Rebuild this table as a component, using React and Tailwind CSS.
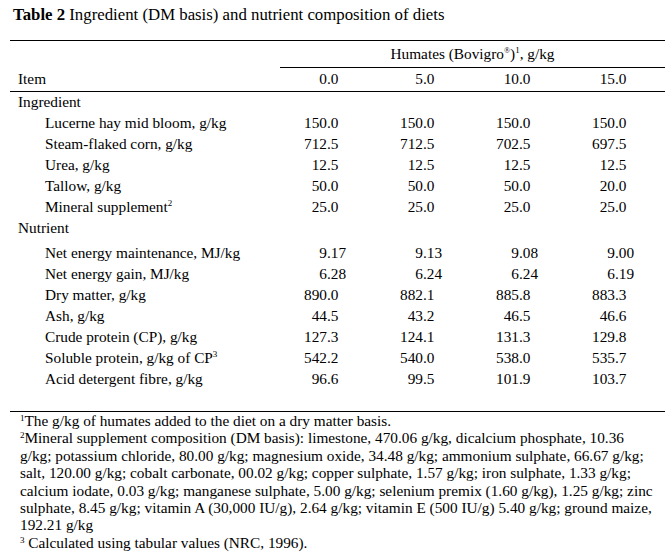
const ingredients = [
  { label: 'Lucerne hay mid bloom, g/kg', values: ['150.0', '150.0', '150.0', '150.0'] },
  { label: 'Steam-flaked corn, g/kg', values: ['712.5', '712.5', '702.5', '697.5'] },
  { label: 'Urea, g/kg', values: ['12.5', '12.5', '12.5', '12.5'] },
  { label: 'Tallow, g/kg', values: ['50.0', '50.0', '50.0', '20.0'] },
  { label: 'Mineral supplement', sup: '2', values: ['25.0', '25.0', '25.0', '25.0'] },
]

const nutrients = [
  { label: 'Net energy maintenance, MJ/kg', values: ['9.17', '9.13', '9.08', '9.00'] },
  { label: 'Net energy gain, MJ/kg', values: ['6.28', '6.24', '6.24', '6.19'] },
  { label: 'Dry matter, g/kg', values: ['890.0', '882.1', '885.8', '883.3'] },
  { label: 'Ash, g/kg', values: ['44.5', '43.2', '46.5', '46.6'] },
  { label: 'Crude protein (CP), g/kg', values: ['127.3', '124.1', '131.3', '129.8'] },
  { label: 'Soluble protein, g/kg of CP', sup: '3', values: ['542.2', '540.0', '538.0', '535.7'] },
  { label: 'Acid detergent fibre, g/kg', values: ['96.6', '99.5', '101.9', '103.7'] },
]

const footnotes = [
  { sup: '1', text: 'The g/kg of humates added to the diet on a dry matter basis.' },
  { sup: '2', text: 'Mineral supplement composition (DM basis): limestone, 470.06 g/kg, dicalcium phosphate, 10.36' },
  { text: 'g/kg; potassium chloride, 80.00 g/kg; magnesium oxide, 34.48 g/kg; ammonium sulphate, 66.67 g/kg;' },
  { text: 'salt, 120.00 g/kg; cobalt carbonate, 00.02 g/kg; copper sulphate, 1.57 g/kg; iron sulphate, 1.33 g/kg;' },
  { text: 'calcium iodate, 0.03 g/kg; manganese sulphate, 5.00 g/kg; selenium premix (1.60 g/kg), 1.25 g/kg; zinc' },
  { text: 'sulphate, 8.45 g/kg; vitamin A (30,000 IU/g), 2.64 g/kg; vitamin E (500 IU/g) 5.40 g/kg; ground maize,' },
  { text: '192.21 g/kg' },
  { sup: '3', text: ' Calculated using tabular values (NRC, 1996).' },
]

// number split at the decimal point so columns line up on it
const Num = ({ value }) => {
  const [whole, frac] = value.split('.')
  return (
    <div className="flex w-[96px] last:w-[97px]">
      <span className="w-[47px] shrink-0 text-right">{whole}</span>
      <span>.{frac}</span>
    </div>
  )
}

const Row = ({ item, className = '' }) => (
  <div className={`flex h-[21px] items-center leading-[21px] ${className}`}>
    <div className="w-[270px] shrink-0 pl-[35px]">
      {item.label}
      {item.sup && <sup className="top-[-6px] text-[9px]">{item.sup}</sup>}
    </div>
    {item.values.map((v, i) => (
      <Num key={i} value={v} />
    ))}
  </div>
)

const App = () => {
  return (
    <div className="h-[556px] w-[672px] bg-white font-['Liberation_Serif','Times_New_Roman',serif] text-[15.3px] text-black">
      <div className="pl-[13px] pt-[5px] text-[16.8px] leading-[20px]">
        <span className="font-bold">Table 2</span> Ingredient (DM basis) and nutrient composition of diets
      </div>

      <div className="ml-[10px] mt-[15px] w-[655px]">
        <div className="border-t border-black" />
        <div className="flex h-[26px] items-center">
          <div className="w-[270px] shrink-0" />
          <div className="flex-1 text-center">
            Humates (Bovigro<sup className="top-[-6px] text-[8px]">®</sup>)<sup className="top-[-6px] text-[9px]">1</sup>, g/kg
          </div>
        </div>
        <div className="ml-[270px] border-t border-black" />
        <div className="flex h-[23px] items-center">
          <div className="w-[270px] shrink-0 pl-[8px]">Item</div>
          {['0.0', '5.0', '10.0', '15.0'].map((v) => (
            <Num key={v} value={v} />
          ))}
        </div>
        <div className="border-t border-black" />

        <div className="flex h-[20px] items-center pl-[8px] leading-[20px]">Ingredient</div>
        {ingredients.map((item) => (
          <Row key={item.label} item={item} className="h-[20.8px]" />
        ))}
        <div className="flex h-[21px] items-center pl-[8px] leading-[21px]">Nutrient</div>
        {nutrients.map((item, i) => (
          <Row key={item.label} item={item} className={i === 0 ? 'mt-[4px]' : ''} />
        ))}

        <div className="mt-[22px] border-t border-black" />
      </div>

      <div className="pl-[20px] leading-[17.4px]">
        {footnotes.map((f, i) => (
          <div key={i} className="whitespace-nowrap">
            {f.sup && <sup className="top-[-5px] text-[9px]">{f.sup}</sup>}
            {f.text}
          </div>
        ))}
      </div>
    </div>
  )
}

export default App
